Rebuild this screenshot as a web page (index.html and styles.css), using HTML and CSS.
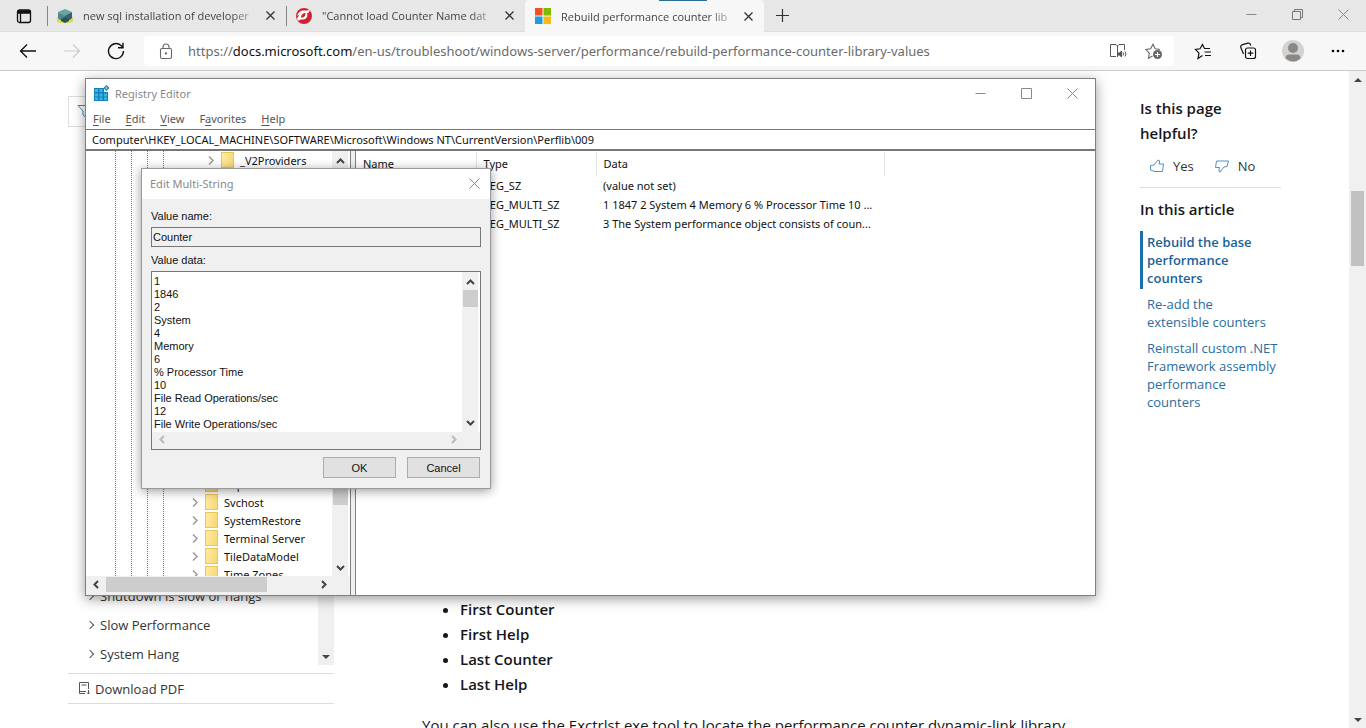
FILE: index.html
```html
<!DOCTYPE html>
<html lang="en">
<head>
  <meta charset="UTF-8" />
  <meta name="viewport" content="width=device-width, initial-scale=1.0"/>
  <title>Rebuild performance counter library values</title>
  <link rel="stylesheet" href="styles.css">
</head>
<body>

  <header class="browser">
    <div class="tab-bar">
      <button class="tab-actions" aria-label="Tab actions">
        <svg width="16" height="16" viewBox="0 0 16 16" fill="none" stroke="#111" stroke-width="1.3"><rect x="1.5" y="2" width="13" height="12.5" rx="2"/><path d="M2 3h12v2H2zM4.5 5v9" fill="#111"/></svg>
      </button>
      <div class="tab">
        <svg width="16" height="16" viewBox="0 0 16 16"><path d="M0 9l3-1 5 5 5-5 3 1v5l-4 1H4l-4-1z" fill="#d9dc52"/><path d="M8 1l7 3-7 3.500L1 4z" fill="#6aa3a5"/><path d="M1 4l7 3.500V11L3 12l-2-2z" fill="#4f878b"/><path d="M15 4L8 7.500V11l5 1 2-2z" fill="#35646c"/><path d="M4 11l4-2 4 2v2l-4 2-4-2z" fill="#28535c"/></svg>
        <span class="tab-title">new sql installation of developer</span>
        <button class="tab-close" aria-label="Close tab"><svg width="9" height="9" viewBox="0 0 9 9"><path d="M.5.5l8 8M8.500.5l-8 8" stroke="#333" stroke-width="1.3"/></svg></button>
      </div>
      <div class="tab">
        <svg width="16" height="16" viewBox="0 0 16 16"><circle cx="8" cy="8" r="8" fill="#d3222f"/><path d="M1 8c1-4 4-6 8-5.500 2 .2 3.500 0 4.500-1C14 4 12.500 5 11 5c1.500 3-1 6.500-4 6.500-2 0-3.500 0-5 1.500-.5-1-.8-2-.8-3C2.500 8.500 3 7 4 6z" fill="#fff"/><path d="M5 9.500C5 6.500 7 5 9.500 5c.3 2.500-1.500 5-4.500 4.500z" fill="#d3222f"/></svg>
        <span class="tab-title">"Cannot load Counter Name dat</span>
        <button class="tab-close" aria-label="Close tab"><svg width="9" height="9" viewBox="0 0 9 9"><path d="M.5.5l8 8M8.500.5l-8 8" stroke="#333" stroke-width="1.3"/></svg></button>
      </div>
      <div class="tab active">
        <svg width="16" height="16" viewBox="0 0 16 16"><path d="M0 0h7.500v7.500H0z" fill="#f25022"/><path d="M8.500 0H16v7.500H8.500z" fill="#7fba00"/><path d="M0 8.500h7.500V16H0z" fill="#1a9fe0"/><path d="M8.500 8.500H16V16H8.500z" fill="#f7b916"/></svg>
        <span class="tab-title">Rebuild performance counter lib</span>
        <button class="tab-close" aria-label="Close tab"><svg width="9" height="9" viewBox="0 0 9 9"><path d="M.5.5l8 8M8.500.5l-8 8" stroke="#333" stroke-width="1.3"/></svg></button>
      </div>
      <button class="new-tab" aria-label="New tab"><svg width="15" height="15" viewBox="0 0 15 15"><path d="M7.500 1v13M1 7.500h13" stroke="#333" stroke-width="1.2"/></svg></button>
      <div class="window-controls">
        <button aria-label="Minimize"><svg width="11" height="11" viewBox="0 0 11 11"><path d="M.5 5.500h10" stroke="#888"/></svg></button>
        <button aria-label="Restore"><svg width="11" height="11" viewBox="0 0 11 11" fill="none" stroke="#777"><path d="M.5 2.500h8v8h-8zM2.500 2.500v-2h8v8h-2"/></svg></button>
        <button aria-label="Close"><svg width="11" height="11" viewBox="0 0 11 11"><path d="M.5.5l10 10M10.500.5l-10 10" stroke="#888"/></svg></button>
      </div>
    </div>

    <div class="toolbar">
      <button class="nav-btn" aria-label="Back"><svg width="18" height="16" viewBox="0 0 18 16" fill="none" stroke="#111" stroke-width="1.3"><path d="M17 8H1.500M8 1.500L1.500 8 8 14.500"/></svg></button>
      <button class="nav-btn" aria-label="Forward"><svg width="18" height="16" viewBox="0 0 18 16" fill="none" stroke="#ccc" stroke-width="1.2"><path d="M1 8h15.500M10 1.500L16.500 8 10 14.500"/></svg></button>
      <button class="nav-btn" aria-label="Refresh"><svg width="18" height="18" viewBox="0 0 18 18" fill="none" stroke="#111" stroke-width="1.4"><path d="M16.500 9A7.500 7.500 0 1 1 14 3.500l2 2M16 .8v4.900h-5"/></svg></button>
      <div class="address-bar">
        <svg width="14" height="17" viewBox="0 0 14 17" fill="none" stroke="#666" stroke-width="1.1"><rect x="1.500" y="5.500" width="11" height="10" rx="1.500"/><path d="M4 5.500V4a3 3 0 0 1 6 0v1.500"/><circle cx="7" cy="10.500" r=".6" fill="#666"/></svg>
        <span class="url">https://<b>docs.microsoft.com</b>/en-us/troubleshoot/windows-server/performance/rebuild-performance-counter-library-values</span>
        <button aria-label="Read aloud"><svg width="18" height="16" viewBox="0 0 18 16" fill="none" stroke="#555"><path d="M7 13.500H1.500v-12H7l1.500 1.500V14M8.500 3L10 1.500h5.500V7"/><path d="M9 10h1.500l2-2v6l-2-2H9z" fill="#555"/><path d="M14 9.500q1 1.500 0 3M16 8.500q2 2.500 0 5"/></svg></button>
        <button aria-label="Add to favorites"><svg width="18" height="17" viewBox="0 0 18 17" fill="none" stroke="#666" stroke-width="1.100"><path d="M7.500 13L3.500 15.200l.8-5L1 6.500l4.700-.7L8 1.300l2.200 4.500 4.800.7"/><circle cx="12.500" cy="11.500" r="4.500" fill="#666" stroke="none"/><path d="M12.500 9v5M10 11.500h5" stroke="#fff"/></svg></button>
      </div>
      <button class="menu-btn" aria-label="Favorites"><svg width="18" height="17" viewBox="0 0 18 17" fill="none" stroke="#111" stroke-width="1.200"><path d="M8.500 12.500L4 15.500l1-5.300L1.500 6.500l4.500-.7L8.500 1.500l2 4H16M10.500 9H17M11 12.500h6"/></svg></button>
      <button class="menu-btn" aria-label="Collections"><svg width="18" height="18" viewBox="0 0 18 18" fill="none" stroke="#111" stroke-width="1.200"><rect x="6.500" y="6" width="10" height="10.500" rx="2"/><path d="M11.500 8.500V14M8.700 11.200h5.600M4.500 12L2 6Q1 3.500 3.500 2.600L9 1.200q2-.5 3 2.300"/></svg></button>
      <button class="menu-btn" aria-label="Profile"><svg width="22" height="22" viewBox="0 0 22 22"><circle cx="11" cy="11" r="11" fill="#d4d2d0"/><circle cx="11" cy="8" r="5" fill="#8a8886"/><path d="M3.500 18.500q0-4 4-4h7q4 0 4 4-7 6-15 0z" fill="#8a8886"/></svg></button>
      <button class="menu-btn" aria-label="Settings and more"><svg width="14" height="4" viewBox="0 0 14 4"><circle cx="2" cy="2" r="1.300"/><circle cx="7" cy="2" r="1.300"/><circle cx="12" cy="2" r="1.300"/></svg></button>
    </div>
  </header>

  <div class="page">
    <nav class="sidebar">
      <div class="filter">
        <svg width="15" height="15" viewBox="0 0 15 15" fill="none" stroke="#4a86b8"><path d="M1 1.500h12L8.500 7v6L6 11V7z"/></svg>
      </div>
      <div class="sidebar-bottom">
        <div class="toc">
          <ul>
            <li><a href="#">Shutdown is slow or hangs</a></li>
            <li><a href="#">Slow Performance</a></li>
            <li><a href="#">System Hang</a></li>
          </ul>
          <div class="toc-scroll"><span class="arrow-down"></span></div>
        </div>
        <a class="download" href="#">
          <svg width="12" height="13" viewBox="0 0 12 13" fill="none" stroke="#555"><path d="M10.500 7V.5h-9v11H7M3.500 3h5M1.500 9.500H8M10.500 8v4M9 10.500l1.500 1.500 1.500-1.500"/></svg>
          Download PDF
        </a>
      </div>
    </nav>

    <main class="article">
      <ul>
        <li>First Counter</li>
        <li>First Help</li>
        <li>Last Counter</li>
        <li>Last Help</li>
      </ul>
      <p>You can also use the Exctrlst.exe tool to locate the performance counter dynamic-link library</p>
    </main>

    <aside class="rail">
      <h2>Is this page<br>helpful?</h2>
      <div class="feedback">
        <button><svg width="16" height="14" viewBox="0 0 16 14" fill="none" stroke="#4c93c8"><path d="M1.500 6.500L5 6l4-5q2 0 1.500 2L10 5h4.500l-1 7.500H6L1.500 11z"/></svg>Yes</button>
        <button><svg width="16" height="14" viewBox="0 0 16 14" fill="none" stroke="#4c93c8"><path d="M14.500 2L13 7.500l-3 .5-4 5q-1.500 0-1-2l.5-2.500H1.500L2.500 2H10z"/></svg>No</button>
      </div>
      <h2>In this article</h2>
      <nav class="links">
        <a class="current" href="#">Rebuild the base performance counters</a>
        <a href="#">Re-add the<br>extensible counters</a>
        <a href="#">Reinstall custom .NET Framework assembly performance counters</a>
      </nav>
    </aside>

    <div class="page-scroll">
      <span class="arrow-up"></span>
      <span class="thumb"></span>
      <span class="arrow-down"></span>
    </div>
  </div>

  <!-- Registry Editor window -->
  <section class="regedit">
    <div class="reg-title">
      <svg width="17" height="17" viewBox="0 0 17 17"><path d="M1 3h10v4h4v9H1z" fill="#1681b8"/><path d="M2 4h3v3H2zM6.500 4h3v3h-3zM2 8.500h3v3H2zM6.500 8.500h3v3h-3zM11 8.500h3v3h-3zM2 12.500h3v2.500H2zM6.500 12.500h3v2.500h-3zM11 12.500h3v2.500h-3z" fill="#35b8ec"/><path d="M13.500 0L16.500 3l-3 3-3-3z" fill="#2a6f92"/><path d="M13.500 1.500L15 3l-1.500 1.500L12 3z" fill="#8ad5f2"/></svg>
      <span>Registry Editor</span>
      <div class="window-controls">
        <button aria-label="Minimize"><svg width="11" height="11" viewBox="0 0 11 11"><path d="M.5 5.500h10" stroke="#888"/></svg></button>
        <button aria-label="Maximize"><svg width="11" height="11" viewBox="0 0 11 11"><path d="M.5.5h10v10H.5z" fill="none" stroke="#888"/></svg></button>
        <button aria-label="Close"><svg width="11" height="11" viewBox="0 0 11 11"><path d="M.5.5l10 10M10.500.5l-10 10" stroke="#888"/></svg></button>
      </div>
    </div>
    <div class="reg-menu">
      <button><u>F</u>ile</button>
      <button><u>E</u>dit</button>
      <button><u>V</u>iew</button>
      <button>F<u>a</u>vorites</button>
      <button><u>H</u>elp</button>
    </div>
    <input class="reg-path" type="text" aria-label="Path" value="Computer\HKEY_LOCAL_MACHINE\SOFTWARE\Microsoft\Windows NT\CurrentVersion\Perflib\009">
    <div class="reg-body">
      <div class="tree-pane">
        <div class="tree-main">
          <div class="tree">
            <i class="guide"></i><i class="guide"></i><i class="guide"></i><i class="guide"></i>
            <div class="keys">
              <div class="key child"><svg class="chev" viewBox="0 0 6 9"><path d="M1 .5l4 4-4 4"/></svg><span class="folder"></span>_V2Providers</div>
              <div class="key-group">
                <div class="key"><svg class="chev" viewBox="0 0 6 9"><path d="M1 .5l4 4-4 4"/></svg><span class="folder"></span>Superfetch</div>
                <div class="key"><svg class="chev" viewBox="0 0 6 9"><path d="M1 .5l4 4-4 4"/></svg><span class="folder"></span>Svchost</div>
                <div class="key"><svg class="chev" viewBox="0 0 6 9"><path d="M1 .5l4 4-4 4"/></svg><span class="folder"></span>SystemRestore</div>
                <div class="key"><svg class="chev" viewBox="0 0 6 9"><path d="M1 .5l4 4-4 4"/></svg><span class="folder"></span>Terminal Server</div>
                <div class="key"><svg class="chev" viewBox="0 0 6 9"><path d="M1 .5l4 4-4 4"/></svg><span class="folder"></span>TileDataModel</div>
                <div class="key"><svg class="chev" viewBox="0 0 6 9"><path d="M1 .5l4 4-4 4"/></svg><span class="folder"></span>Time Zones</div>
              </div>
            </div>
          </div>
          <div class="vscroll">
            <svg width="9" height="6" viewBox="0 0 9 6"><path d="M1 5l3.500-3.500L8 5"/></svg>
            <span class="thumb"></span>
            <svg width="9" height="6" viewBox="0 0 9 6"><path d="M1 1l3.500 3.500L8 1"/></svg>
          </div>
        </div>
        <div class="hscroll">
          <svg width="6" height="9" viewBox="0 0 6 9"><path d="M5 1L1.500 4.500 5 8"/></svg>
          <span class="thumb"></span>
          <svg width="6" height="9" viewBox="0 0 6 9"><path d="M1 1l3.500 3.500L1 8"/></svg>
        </div>
      </div>
      <div class="value-pane">
        <table>
          <thead>
            <tr><th class="col-name">Name</th><th class="col-type">Type</th><th class="col-data">Data</th></tr>
          </thead>
          <tbody>
            <tr><td></td><td>REG_SZ</td><td>(value not set)</td></tr>
            <tr><td></td><td>REG_MULTI_SZ</td><td>1 1847 2 System 4 Memory 6 % Processor Time 10 ...</td></tr>
            <tr><td></td><td>REG_MULTI_SZ</td><td>3 The System performance object consists of coun...</td></tr>
          </tbody>
        </table>
      </div>
    </div>
  </section>

  <!-- Edit Multi-String dialog -->
  <section class="dialog">
    <div class="dialog-title">
      <span>Edit Multi-String</span>
      <button aria-label="Close"><svg width="11" height="11" viewBox="0 0 11 11"><path d="M.5.5l10 10M10.500.5l-10 10" stroke="#888"/></svg></button>
    </div>
    <div class="dialog-body">
      <label for="value-name">Value name:</label>
      <input id="value-name" type="text" value="Counter" readonly>
      <label for="value-data">Value data:</label>
      <div class="data-box">
        <div class="data-main">
          <textarea id="value-data" spellcheck="false">1
1846
2
System
4
Memory
6
% Processor Time
10
File Read Operations/sec
12
File Write Operations/sec</textarea>
          <div class="vscroll">
            <svg width="9" height="6" viewBox="0 0 9 6"><path d="M1 5l3.500-3.500L8 5"/></svg>
            <span class="thumb"></span>
            <svg width="9" height="6" viewBox="0 0 9 6"><path d="M1 1l3.500 3.500L8 1"/></svg>
          </div>
        </div>
        <div class="hscroll">
          <svg width="6" height="9" viewBox="0 0 6 9"><path d="M5 1L1.500 4.500 5 8"/></svg>
          <svg width="6" height="9" viewBox="0 0 6 9"><path d="M1 1l3.500 3.500L1 8"/></svg>
        </div>
      </div>
      <div class="dialog-buttons">
        <button>OK</button>
        <button>Cancel</button>
      </div>
    </div>
  </section>

</body>
</html>
```
FILE: styles.css
```css
* {
  box-sizing: border-box;
}

body {
  margin: 0;
  height: 100vh;
  overflow: hidden;
  display: flex;
  flex-direction: column;
  position: relative;
  background: #fff;
  color: #171717;
  font-family: 'Open Sans', sans-serif;
  font-size: 13px;
}

button {
  display: flex;
  align-items: center;
  justify-content: center;
  padding: 0;
  border: none;
  background: transparent;
  font: inherit;
  color: inherit;
}

svg {
  display: block;
  flex-shrink: 0;
}

ul, h2, p {
  margin: 0;
  padding: 0;
}

a {
  color: inherit;
  text-decoration: none;
}

/* Browser tabs */
.tab-bar {
  display: flex;
  height: 32px;
  background: #e7e7e7;
  border-bottom: 1px solid #dedede;
}

.tab-actions {
  width: 47px;
}

.tab {
  display: flex;
  align-items: center;
  gap: 10px;
  width: 239px;
  padding: 0 10px;
  font-size: 11px;
  color: #444;
  background: linear-gradient(#888, #888) left center / 1px 20px no-repeat;
}

.tab-title {
  flex: 1;
  overflow: hidden;
  white-space: nowrap;
  -webkit-mask-image: linear-gradient(to right, #000 86%, rgba(0, 0, 0, 0.2));
  mask-image: linear-gradient(to right, #000 86%, rgba(0, 0, 0, 0.2));
}

.tab-close {
  width: 11px;
  height: 16px;
}

.tab.active {
  height: 32px;
  background: linear-gradient(#2b6f96, #2b6f96) 134px top / 48px 1px no-repeat #f7f7f7;
  border-radius: 4px 4px 0 0;
}

.new-tab {
  width: 37px;
}

.window-controls {
  display: flex;
  margin-left: auto;
}

.window-controls button {
  width: 46px;
  height: 28px;
}

/* Toolbar */
.toolbar {
  display: flex;
  align-items: center;
  height: 39px;
  padding: 0 6px;
  background: #f7f7f7;
  border-bottom: 1px solid #ccc;
}

.nav-btn {
  width: 44px;
  height: 30px;
}

.menu-btn {
  width: 45px;
  height: 30px;
}

.address-bar {
  flex: 1;
  display: flex;
  align-items: center;
  height: 30px;
  margin: 0 6px;
  padding: 0 2px 0 15px;
  background: #fff;
  border-radius: 4px;
}

.url {
  flex: 1;
  margin-left: 15px;
  overflow: hidden;
  white-space: nowrap;
  font-family: 'Noto Sans', sans-serif;
  color: #6b6b6b;
}

.url b {
  font-weight: normal;
  color: #111;
}

.address-bar button {
  width: 36px;
  height: 30px;
}

/* Docs page */
.page {
  flex: 1;
  min-height: 0;
  display: flex;
}

.sidebar {
  display: flex;
  flex-direction: column;
  justify-content: space-between;
  width: 266px;
  margin-left: 68px;
  padding: 25px 0 24px;
}

.filter {
  height: 31px;
  padding: 7px 8px;
  border: 1px solid #ddd;
}

.toc {
  display: flex;
  justify-content: space-between;
  height: 84px;
  margin-bottom: 8px;
}

.toc ul {
  list-style: none;
  padding-left: 32px;
}

.toc li {
  position: relative;
  height: 29px;
  line-height: 31px;
  color: #333;
}

.toc li::before {
  content: '';
  position: absolute;
  left: -13px;
  top: 12px;
  width: 5px;
  height: 5px;
  border-top: 1px solid #555;
  border-right: 1px solid #555;
  transform: rotate(45deg);
}

.toc-scroll {
  display: flex;
  align-items: flex-end;
  justify-content: center;
  width: 16px;
  padding-bottom: 6px;
  background: #f0f0f0;
}

.arrow-down, .arrow-up {
  border: 4px solid transparent;
}

.arrow-down {
  border-top-color: #444;
  border-bottom: 0;
}

.arrow-up {
  border-bottom-color: #444;
  border-top: 0;
}

.download {
  display: flex;
  align-items: center;
  gap: 5px;
  height: 31px;
  padding-left: 10px;
  border-top: 1px solid #ddd;
  border-bottom: 1px solid #ddd;
  color: #333;
}

.article {
  flex: 1;
  margin-left: 88px;
  padding-top: 526px;
  font-size: 15px;
  line-height: 25px;
  white-space: nowrap;
}

.article ul {
  padding-left: 38px;
  margin-bottom: 16px;
  font-weight: 600;
}

.rail {
  width: 141px;
  margin-right: 68px;
  padding-top: 25px;
}

.rail h2 {
  font-size: 15px;
  font-weight: 600;
  line-height: 25px;
}

.feedback {
  display: flex;
  gap: 20px;
  height: 42px;
  margin-bottom: 9px;
  padding: 0 0 1px 9px;
  border-bottom: 1px solid #ddd;
  color: #333;
}

.feedback button {
  gap: 8px;
}

.links {
  margin-top: 9px;
}

.links a {
  display: block;
  margin-bottom: 8px;
  padding-left: 7px;
  line-height: 18px;
  color: #2a6d9f;
}

.links .current {
  margin-bottom: 6px;
  padding: 2px 20px 2px 4px;
  border-left: 3px solid #1a6fb0;
  color: #1a6296;
  font-weight: 600;
}

.page-scroll {
  display: flex;
  flex-direction: column;
  align-items: center;
  width: 17px;
  padding: 7px 0 6px;
  background: #f0f0f0;
}

.page-scroll .thumb {
  width: 13px;
  height: 75px;
  margin-top: 109px;
  background: #c1c1c1;
}

.page-scroll .arrow-down {
  margin-top: auto;
}

/* Shared scrollbars for the desktop windows */
.vscroll, .hscroll {
  display: flex;
  align-items: center;
  justify-content: space-between;
  background: #f0f0f0;
  fill: none;
  stroke: #444;
  stroke-width: 2;
}

.vscroll {
  flex-direction: column;
  width: 16px;
}

.vscroll .thumb, .hscroll .thumb {
  background: #cdcdcd;
}

/* Registry Editor */
.regedit {
  position: absolute;
  left: 85px;
  top: 78px;
  width: 1011px;
  height: 518px;
  display: flex;
  flex-direction: column;
  border: 1px solid #808080;
  background: #fff;
  box-shadow: 0 3px 12px rgba(0, 0, 0, 0.4);
  color: #111;
  font-family: 'Noto Sans', sans-serif;
  font-size: 11px;
}

.reg-title {
  display: flex;
  align-items: center;
  height: 29px;
  padding-left: 7px;
  color: #888;
}

.reg-title span {
  margin-left: 5px;
}

.reg-menu {
  display: flex;
  gap: 15px;
  height: 21px;
  padding: 0 7px 1px;
  color: #555;
}

.reg-menu u {
  text-underline-offset: 2px;
}

.reg-path {
  height: 22px;
  padding: 0 6px;
  border: 1px solid #777;
  border-width: 1px 0 2px;
  font: inherit;
  color: #111;
}

.reg-body {
  flex: 1;
  min-height: 0;
  display: flex;
  gap: 4px;
  background: #f0f0f0;
}

.tree-pane {
  display: flex;
  flex-direction: column;
  width: 265px;
  border-right: 1px solid #808080;
  background: #fff;
}

.tree-main {
  flex: 1;
  min-height: 0;
  display: flex;
}

.tree {
  flex: 1;
  display: flex;
  padding-left: 29px;
  overflow: hidden;
}

.guide {
  width: 16px;
  border-left: 1px dotted #777;
}

.keys {
  display: flex;
  flex-direction: column;
  justify-content: space-between;
  height: 432px;
  padding-left: 13px;
}

.key {
  display: flex;
  align-items: center;
  height: 18px;
  white-space: nowrap;
}

.child {
  padding-left: 16px;
}

.chev {
  width: 6px;
  height: 9px;
  margin-right: 7px;
  fill: none;
  stroke: #999;
  stroke-width: 1.5;
}

.folder {
  width: 13px;
  height: 16px;
  margin-right: 6px;
  border: 1px solid #e8c65c;
  background: linear-gradient(100deg, #ffeb9f, #f8d775);
}

.tree-pane .vscroll {
  margin-right: 2px;
  padding: 7px 0 5px;
}

.tree-pane .vscroll .thumb {
  width: 15px;
  height: 40px;
  margin: auto 0 60px;
}

.tree-pane .hscroll {
  height: 19px;
  padding: 0 23px 2px 7px;
}

.tree-pane .hscroll .thumb {
  width: 161px;
  height: 15px;
  margin-right: 48px;
}

.value-pane {
  flex: 1;
  padding-top: 1px;
  border-left: 1px solid #808080;
  background: #fff;
}

.value-pane table {
  border-collapse: collapse;
  table-layout: fixed;
  width: 529px;
}

.value-pane th {
  height: 24px;
  padding: 0 7px 2px;
  border-right: 1px solid #e2e2e2;
  font-weight: normal;
  text-align: left;
}

.value-pane td {
  height: 19px;
  padding: 0 7px;
  white-space: nowrap;
}

.col-name {
  width: 120px;
}

.col-type {
  width: 120px;
}

/* Edit Multi-String */
.dialog {
  position: absolute;
  left: 141px;
  top: 168px;
  width: 350px;
  border: 1px solid #999;
  background: #f0f0f0;
  box-shadow: 0 2px 10px rgba(0, 0, 0, 0.4);
  color: #111;
  font-family: 'Liberation Sans', sans-serif;
  font-size: 11px;
}

.dialog-title {
  display: flex;
  align-items: center;
  justify-content: space-between;
  height: 30px;
  padding: 0 10px 2px 8px;
  background: #fff;
  color: #888;
  font-family: 'Noto Sans', sans-serif;
}

.dialog-body {
  display: flex;
  flex-direction: column;
  padding: 8px 9px 10px;
}

.dialog-body label {
  height: 20px;
  line-height: 18px;
}

.dialog-body input {
  height: 20px;
  padding: 0 1px;
  border: 1px solid #777;
  background: #f0f0f0;
  font: inherit;
  color: #111;
}

.dialog-body input + label {
  height: 24px;
  line-height: 26px;
}

.data-box {
  border: 1px solid #777;
  background: #fff;
}

.data-main {
  display: flex;
  height: 160px;
}

.data-box textarea {
  flex: 1;
  margin: 0;
  padding: 3px 2px 0;
  border: none;
  outline: none;
  resize: none;
  overflow: hidden;
  font: inherit;
  line-height: 13px;
  color: #111;
}

.data-main .vscroll {
  margin-right: 2px;
  padding: 7px 0 6px;
}

.data-main .vscroll .thumb {
  width: 15px;
  height: 17px;
  margin-bottom: 108px;
}

.data-box .hscroll {
  height: 17px;
  padding: 0 23px 2px 7px;
  stroke: #bbb;
}

.dialog-buttons {
  display: flex;
  justify-content: flex-end;
  gap: 11px;
  margin-top: 7px;
  padding-right: 1px;
}

.dialog-buttons button {
  width: 73px;
  height: 21px;
  border: 1px solid #adadad;
  background: #e1e1e1;
}
```
